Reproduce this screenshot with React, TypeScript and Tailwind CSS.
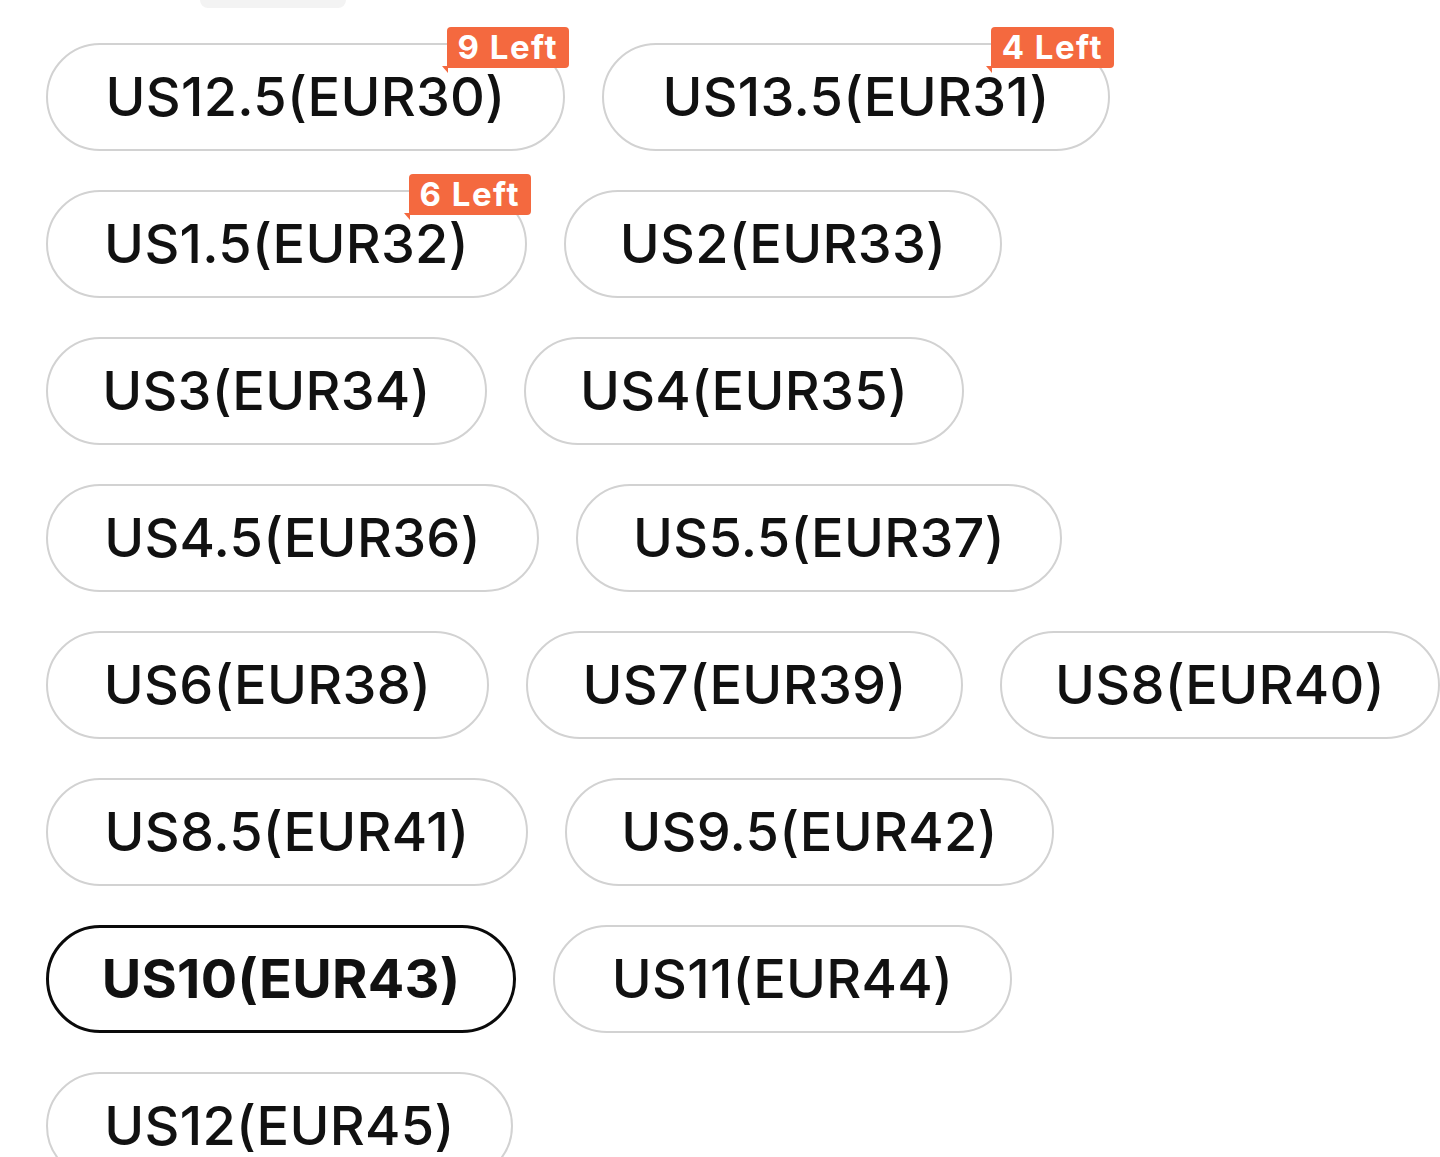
import React from "react";

type Chip = { label: string; w: number; badge?: string; selected?: boolean };

const rows: Chip[][] = [
  [
    { label: "US12.5(EUR30)", w: 519, badge: "9 Left" },
    { label: "US13.5(EUR31)", w: 508, badge: "4 Left" },
  ],
  [
    { label: "US1.5(EUR32)", w: 481, badge: "6 Left" },
    { label: "US2(EUR33)", w: 438 },
  ],
  [
    { label: "US3(EUR34)", w: 441 },
    { label: "US4(EUR35)", w: 440 },
  ],
  [
    { label: "US4.5(EUR36)", w: 493 },
    { label: "US5.5(EUR37)", w: 486 },
  ],
  [
    { label: "US6(EUR38)", w: 443 },
    { label: "US7(EUR39)", w: 437 },
    { label: "US8(EUR40)", w: 440 },
  ],
  [
    { label: "US8.5(EUR41)", w: 482 },
    { label: "US9.5(EUR42)", w: 489 },
  ],
  [
    { label: "US10(EUR43)", w: 470, selected: true },
    { label: "US11(EUR44)", w: 459 },
  ],
  [{ label: "US12(EUR45)", w: 467 }],
];

function ChipView({ c }: { c: Chip }) {
  return (
    <div
      className={
        "relative flex h-[108px] shrink-0 items-center justify-center rounded-full bg-white " +
        (c.selected
          ? "border-[3px] border-[#0a0a0a] font-bold"
          : "border-2 border-[#d2d2d2] font-medium")
      }
      style={{ width: c.w }}
    >
      <span className="text-[54px] leading-none tracking-[0.3px] text-[#111111]">{c.label}</span>
      {c.badge && (
        <div className="absolute right-[-6px] top-[-18px]">
          <div className="relative flex h-[41px] items-center rounded-[4px] rounded-bl-none bg-[#f4693f] px-[11px]">
            <span className="text-[33px] font-bold leading-none tracking-[1.5px] text-white">
              {c.badge}
            </span>
            <div className="absolute bottom-[-5px] left-[-5px] h-0 w-0 border-l-[6px] border-t-[7px] border-l-transparent border-t-[#f4693f]" />
          </div>
        </div>
      )}
    </div>
  );
}

export default function App() {
  return (
    <div
      className="h-[1157px] w-[1440px] overflow-hidden bg-white"
      style={{ fontFamily: "Inter, 'Noto Sans', 'Liberation Sans', sans-serif" }}
    >
      <div className="ml-[200px] h-[8px] w-[146px] rounded-b-full bg-[#f3f3f3]" />
      <div className="flex flex-col gap-[39px] pl-[46px] pt-[35px]">
        {rows.map((r, i) => (
          <div key={i} className="flex gap-[37px]">
            {r.map((c) => (
              <ChipView key={c.label} c={c} />
            ))}
          </div>
        ))}
      </div>
    </div>
  );
}
